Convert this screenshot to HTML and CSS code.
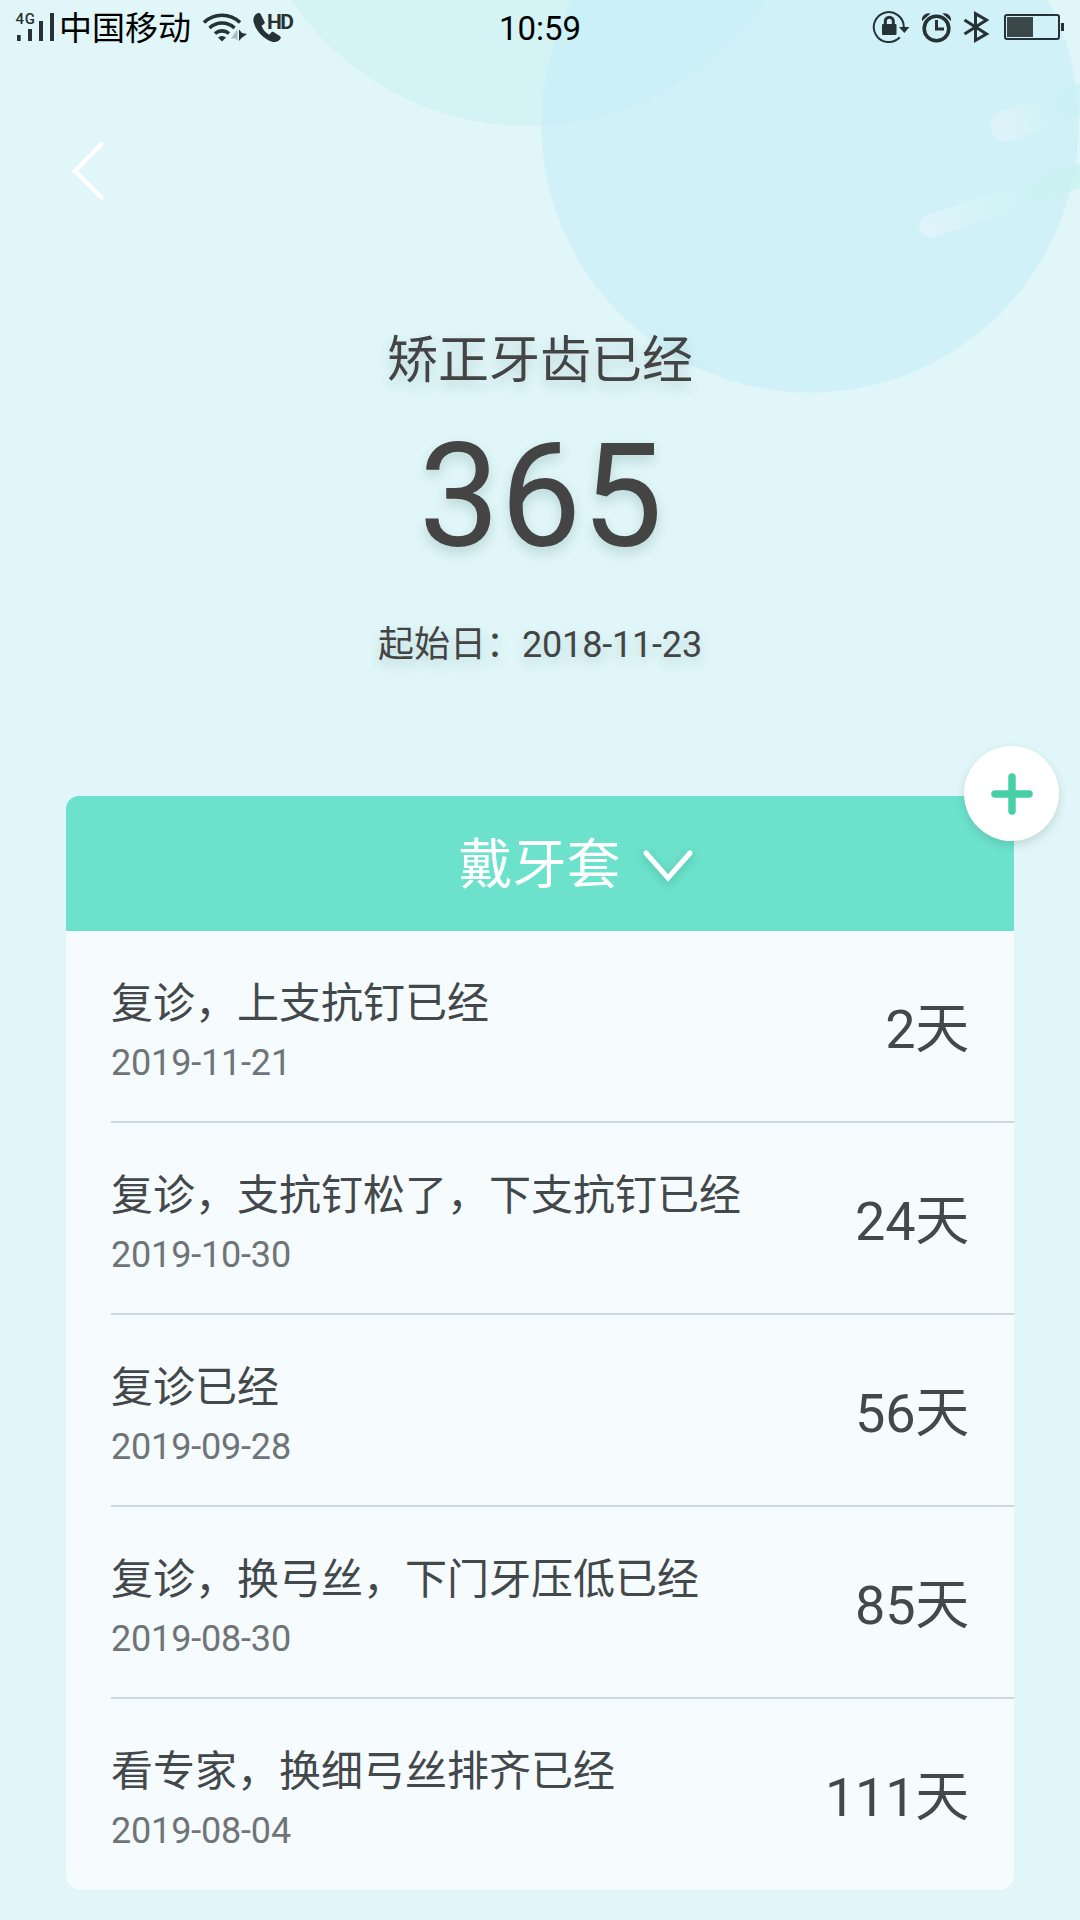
FILE: index.html
```html
<!DOCTYPE html>
<html lang="zh-CN">
<head>
<meta charset="utf-8">
<title>矫正牙齿</title>
<link rel="stylesheet" href="styles.css">
</head>
<body>
<div class="screen">
  <svg class="backdrop" viewBox="0 0 1080 420" width="1080" height="420" aria-hidden="true">
    <defs>
      <linearGradient id="tailA" gradientUnits="userSpaceOnUse" x1="990" y1="132" x2="1085" y2="96">
        <stop offset="0" stop-color="#dff3fa"/>
        <stop offset="0.35" stop-color="#d9f3f8"/>
        <stop offset="0.65" stop-color="#cdf2f6" stop-opacity="0.7"/>
        <stop offset="1" stop-color="#c9f2f3" stop-opacity="0.6"/>
      </linearGradient>
      <linearGradient id="tailB" gradientUnits="userSpaceOnUse" x1="919" y1="231" x2="1085" y2="175">
        <stop offset="0" stop-color="#e0f3fb"/>
        <stop offset="0.3" stop-color="#d8f4f8"/>
        <stop offset="0.6" stop-color="#cef3f5" stop-opacity="0.8"/>
        <stop offset="1" stop-color="#c6f2ef" stop-opacity="0.75"/>
      </linearGradient>
    </defs>
    <circle cx="528" cy="-160" r="286" fill="#d4f3f4"/>
    <circle cx="810" cy="124" r="268.500" fill="#c6eef8" fill-opacity="0.62"/>
    <path d="M1006 126L1100 92" stroke="url(#tailA)" stroke-width="31" stroke-linecap="round"/>
    <path d="M931 226L1100 169" stroke="url(#tailB)" stroke-width="23" stroke-linecap="round"/>
  </svg>

  <header class="status">
    <div class="status-left">
      <svg class="signal" viewBox="15 10 40 34" width="40" height="34">
        <text x="15.500" y="24" class="tiny" textLength="19.500">4G</text>
        <path d="M17 35h3.700v6H17zM28 29h4v12h-4zM39 21h4v20h-4zM50 13h4v28h-4z"/>
      </svg>
      <span class="carrier">中国移动</span>
      <svg class="wifi" viewBox="202 10 46 34" width="46" height="34">
        <g class="line wide">
          <path d="M204 22.500a26 26 0 0 1 36 0"/>
          <path d="M209.500 28a18 18 0 0 1 25 0"/>
          <path d="M215 33.500a10.500 10.500 0 0 1 14 0"/>
        </g>
        <path d="M218 37.500a6 6 0 0 1 8 0l-4 4z"/>
        <path class="faded" d="M237.500 29v12l-2-2.500h-4.500z"/>
        <path d="M239 29.500v11.500l2.500-3 5.500-4-5-1z"/>
      </svg>
      <svg class="call" viewBox="252 10 44 34" width="44" height="34">
        <path d="M257.500 13.200c-3.500 1.800-4.800 5.500-3.800 9.300 2.300 8.500 9.500 16.300 18.300 19.200 3.800 1.200 7.300-.4 8.700-3.400.4-1-.1-1.800-.9-2.300l-6.300-4c-.9-.5-1.700-.4-2.300.4l-1.900 2.300c-3.800-1.900-6.300-5-7.700-8.900l2.300-1.700c.9-.6 1-1.300.7-2.200l-3.700-7.500c-.7-1.300-1.800-1.900-3.400-1.200z"/>
        <text x="267" y="29" class="hd" textLength="27">HD</text>
      </svg>
    </div>
    <time class="clock">10:59</time>
    <div class="status-right">
      <svg viewBox="872 10 38 34" width="38" height="34">
        <path class="line thin" d="M903.800 27a15 15 0 1 0-4 10.300"/>
        <path d="M899 27h10.500l-5.200 6z"/>
        <path d="M883 24h12.500a1 1 0 0 1 1 1v9a1 1 0 0 1-1 1h-12.500a1 1 0 0 1-1-1v-9a1 1 0 0 1 1-1z"/>
        <path class="line" d="M885.300 24.500v-3.300a4 4 0 0 1 8 0v3.300"/>
      </svg>
      <svg class="alarm" viewBox="920 10 34 34" width="34" height="34">
        <circle class="line wide" cx="936.500" cy="28.500" r="12.300"/>
        <path class="line" d="M936.500 20v9h7.500"/>
        <path d="M922.200 21c-1.500-4.200 3.500-9.300 8.300-7.500zM950.800 21c1.500-4.200-3.500-9.300-8.300-7.500z"/>
      </svg>
      <svg class="bluetooth" viewBox="963 10 27 34" width="27" height="34">
        <path class="line" d="M964.500 20l22 14-11 6.300V13.700l11 6.300-22 14"/>
      </svg>
      <svg class="battery" viewBox="1003 10 62 34" width="62" height="34">
        <rect class="line thin" x="1005" y="15" width="54" height="24" rx="2"/>
        <path class="charge" d="M1007 17h26v20h-26z"/>
        <path d="M1061 23h3v8h-3z"/>
      </svg>
    </div>
  </header>

  <nav class="nav">
    <svg viewBox="0 0 36 60" width="36" height="60"><path d="M30.500 4L4 31l26.500 26.500"/></svg>
  </nav>

  <section class="hero">
    <h1 class="hero-title">矫正牙齿已经</h1>
    <div class="hero-count">365</div>
    <div class="hero-date">起始日：<span class="digits">2018-11-23</span></div>
  </section>

  <main class="card">
    <div class="card-head">
      <span>戴牙套</span>
      <svg viewBox="0 0 50 34" width="50" height="34"><path d="M3 4l22 25L47 4"/></svg>
    </div>
    <button class="add" aria-label="添加">
      <svg viewBox="0 0 42 42" width="42" height="42"><path d="M21 4v34M4 21h34"/></svg>
    </button>
    <ul class="list">
      <li class="row"><div><p class="name">复诊，上支抗钉已经</p><p class="date digits">2019-11-21</p></div><span class="days">2天</span></li>
      <li class="row"><div><p class="name">复诊，支抗钉松了，下支抗钉已经</p><p class="date digits">2019-10-30</p></div><span class="days">24天</span></li>
      <li class="row"><div><p class="name">复诊已经</p><p class="date digits">2019-09-28</p></div><span class="days">56天</span></li>
      <li class="row"><div><p class="name">复诊，换弓丝，下门牙压低已经</p><p class="date digits">2019-08-30</p></div><span class="days">85天</span></li>
      <li class="row"><div><p class="name">看专家，换细弓丝排齐已经</p><p class="date digits">2019-08-04</p></div><span class="days">111天</span></li>
    </ul>
  </main>
</div>
</body>
</html>
```
FILE: styles.css
```css
* {
  box-sizing: border-box;
  margin: 0;
  padding: 0;
}

body {
  background: #e0f6f8;
  color: #43484b;
  font-family: Roboto, "Noto Sans CJK SC", sans-serif;
}

svg {
  display: block;
  flex: none;
}

.screen {
  position: relative;
  width: 1080px;
  height: 1920px;
  overflow: hidden;
}

.backdrop {
  position: absolute;
  top: 0;
  left: 0;
  z-index: -1;
}

/* status bar */
.status {
  display: grid;
  grid-template-columns: 1fr auto 1fr;
  height: 54px;
  padding: 0 15px;
  color: #000;
}

.status svg {
  margin-top: 10px;
  fill: #263236;
}

.status .line {
  fill: none;
  stroke: #263236;
  stroke-width: 3;
}

.status .thin {
  stroke-width: 2;
}

.status .wide {
  stroke-width: 3.6;
}

.status .faded {
  fill: #a9bcc0;
}

.status .charge {
  fill: #3c474a;
}

.tiny {
  font-size: 15px;
  font-weight: 500;
}

.hd {
  font-size: 21px;
  font-weight: 700;
}

.status-left,
.status-right {
  display: flex;
}

.status-right {
  justify-content: flex-end;
}

.carrier {
  width: 130px;
  margin-left: 4px;
  margin-right: 1px;
  font-size: 33px;
  line-height: 58px;
  white-space: nowrap;
}

.wifi {
  margin-left: 12px;
}

.call {
  margin-left: 4px;
}

.clock {
  font-size: 33px;
  line-height: 58px;
}

.alarm {
  margin-left: 10px;
}

.bluetooth {
  margin-left: 9px;
}

.battery {
  margin-left: 13px;
}

/* navigation */
.nav {
  height: 166px;
  padding: 86px 0 0 71px;
}

.nav path {
  fill: none;
  stroke: #fff;
  stroke-width: 4.500;
  stroke-linecap: round;
}

/* summary */
.hero {
  display: flex;
  flex-direction: column;
  align-items: center;
  height: 576px;
  padding-top: 111px;
  color: #444;
  text-shadow: 0 6px 12px rgba(60, 110, 105, 0.22);
}

.hero-title {
  font-size: 51px;
  font-weight: 400;
  line-height: 60px;
}

.hero-count {
  margin-top: 26px;
  padding-left: 2px;
  font-size: 144px;
  letter-spacing: 0.500px;
  line-height: 160px;
}

.hero-date {
  margin-top: 44px;
  font-size: 36px;
  line-height: 48px;
}

.digits {
  letter-spacing: -0.180px;
}

/* stage card */
.card {
  position: relative;
  margin: 0 66px;
  border-radius: 15px;
  background: #f6fbfe;
}

.card-head {
  display: flex;
  align-items: center;
  justify-content: center;
  gap: 22px;
  height: 135px;
  padding: 5px 0 0 71px;
  border-radius: 13px 13px 0 0;
  background: #6ce1cb;
  color: #fff;
  font-size: 54px;
  line-height: 70px;
}

.card-head path {
  fill: none;
  stroke: #fff;
  stroke-width: 5;
  stroke-linecap: round;
}

.card-head svg {
  overflow: visible;
  filter: drop-shadow(0 3px 5px rgba(40, 140, 120, 0.4));
}

.add {
  position: absolute;
  top: -50px;
  right: -45px;
  display: grid;
  place-items: center;
  width: 95px;
  height: 95px;
  border: 0;
  border-radius: 50%;
  background: #fff;
  box-shadow: 0 4px 9px rgba(60, 100, 100, 0.2);
}

.add path {
  fill: none;
  stroke: #47d0a6;
  stroke-width: 7.500;
  stroke-linecap: round;
}

.list {
  padding-left: 45px;
  list-style: none;
}

.row {
  display: flex;
  justify-content: space-between;
  height: 192px;
  padding: 43px 45px 0 0;
  border-bottom: 2px solid #cbd8dc;
}

.row:last-child {
  height: 191px;
  border-bottom: 0;
}

.name {
  font-size: 42px;
  line-height: 60px;
}

.date {
  margin-top: 5px;
  color: #6e7477;
  font-size: 36px;
  line-height: 48px;
}

.days {
  margin-top: 26px;
  font-size: 54px;
  letter-spacing: -0.250px;
  line-height: 60px;
}
```
